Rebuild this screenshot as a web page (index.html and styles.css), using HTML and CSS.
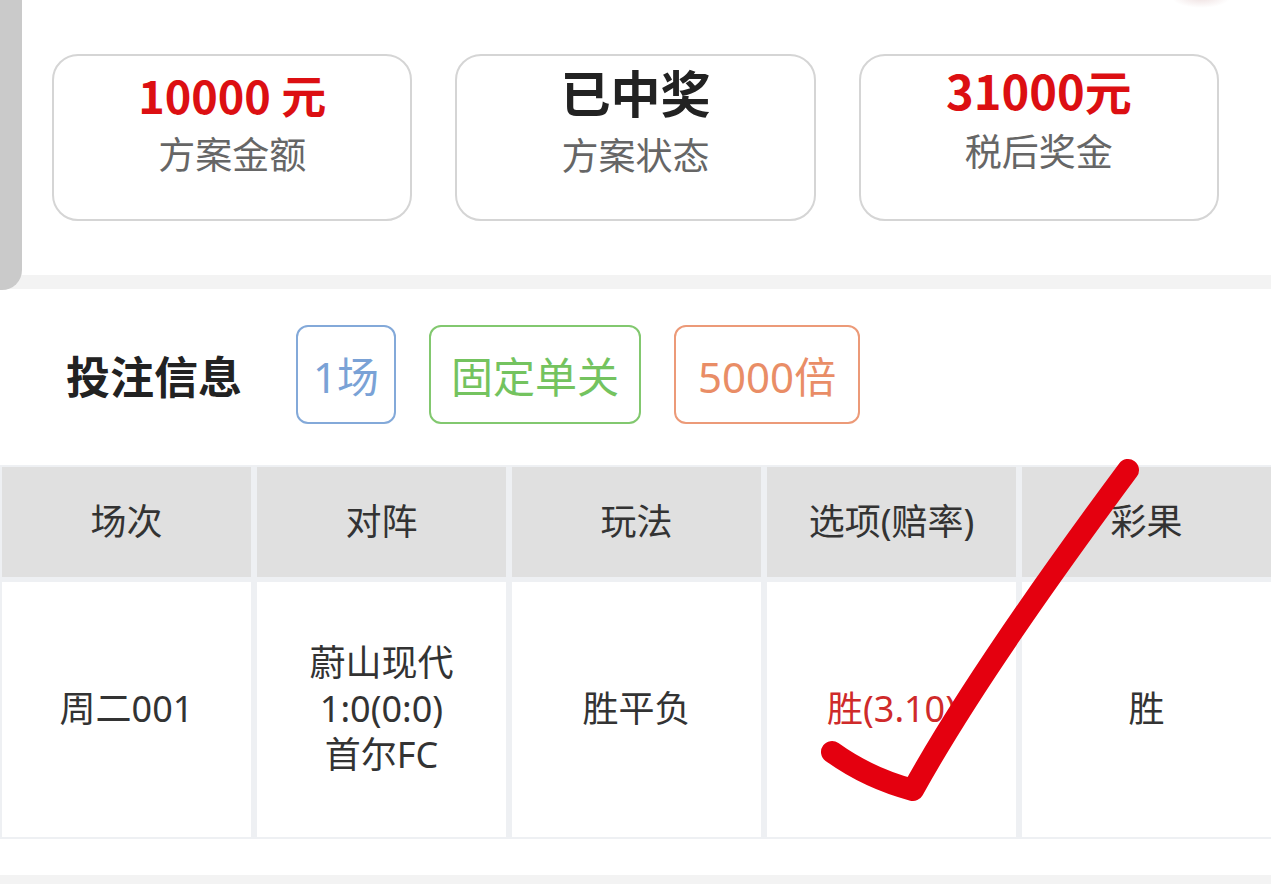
FILE: index.html
```html
<!DOCTYPE html>
<html lang="zh-CN">
<head>
    <meta charset="UTF-8">
    <meta name="viewport" content="width=device-width, initial-scale=1.0">
    <title>方案详情</title>
    <link rel="stylesheet" href="styles.css">
</head>
<body>
    <div class="page">
        <div class="side-handle"></div>
        <div class="corner-shadow"></div>

        <section class="summary">
            <div class="card">
                <p class="card-value red">10000 元</p>
                <p class="card-label">方案金额</p>
            </div>
            <div class="card">
                <p class="card-value dark">已中奖</p>
                <p class="card-label">方案状态</p>
            </div>
            <div class="card">
                <p class="card-value red big">31000元</p>
                <p class="card-label">税后奖金</p>
            </div>
        </section>

        <div class="band"></div>

        <section class="bet-head">
            <h2>投注信息</h2>
            <span class="tag tag-blue">1场</span>
            <span class="tag tag-green">固定单关</span>
            <span class="tag tag-orange">5000倍</span>
        </section>

        <div class="bet-table">
            <div class="th">场次</div>
            <div class="th">对阵</div>
            <div class="th">玩法</div>
            <div class="th">选项(赔率)</div>
            <div class="th">彩果</div>

            <div class="td">周二001</div>
            <div class="td">蔚山现代<br>1:0(0:0)<br>首尔FC</div>
            <div class="td">胜平负</div>
            <div class="td pick">胜(3.10)</div>
            <div class="td">胜</div>
        </div>

        <div class="band band-bottom"></div>

        <svg class="check" width="1271" height="884" viewBox="0 0 1271 884">
            <path d="M832 752 Q868 778 913 790 Q978 672 1128 470" fill="none" stroke="#e4000f" stroke-width="22" stroke-linecap="round" stroke-linejoin="round"/>
        </svg>
    </div>
</body>
</html>
```

FILE: styles.css
```css
* {
    margin: 0;
    padding: 0;
    box-sizing: border-box;
}
body {
    font-family: "Noto Sans", "Noto Sans CJK SC", sans-serif;
    background-color: #fff;
    color: #333;
}
.page {
    position: relative;
    width: 1271px;
    height: 884px;
    overflow: hidden;
}
.side-handle {
    position: absolute;
    left: 0;
    top: 0;
    width: 22px;
    height: 290px;
    background-color: #cacaca;
    border-bottom-right-radius: 20px;
    z-index: 2;
}
.corner-shadow {
    position: absolute;
    right: 40px;
    top: -14px;
    width: 60px;
    height: 22px;
    border-radius: 50%;
    background: radial-gradient(ellipse at center, rgba(220, 190, 190, 0.5), rgba(255, 255, 255, 0) 70%);
}
.summary {
    display: flex;
    gap: 43px;
    padding: 54px 52px;
    height: 275px;
}
.card {
    flex: 1;
    height: 167px;
    border: 2px solid #d5d5d5;
    border-radius: 26px;
    display: flex;
    flex-direction: column;
    align-items: center;
    padding-top: 6px;
}
.card-value {
    font-family: "Noto Sans CJK SC", sans-serif;
    font-size: 45px;
    font-weight: bold;
    line-height: 1.45;
}
.card-value.red {
    color: #dc0f12;
}
.card-value.dark {
    color: #222;
    font-size: 50px;
    margin-top: -7px;
}
.card-value.big {
    font-size: 47px;
    margin-top: -6px;
}
.card-label {
    font-family: "Noto Sans CJK SC", sans-serif;
    font-size: 37px;
    line-height: 1.45;
    color: #666;
}
.band {
    height: 14px;
    background-color: #f3f3f3;
}
.bet-head {
    display: flex;
    align-items: center;
    gap: 33px;
    padding: 36px 0 41px 66px;
}
.bet-head h2 {
    font-family: "Noto Sans CJK SC", sans-serif;
    font-size: 44px;
    font-weight: bold;
    color: #222;
    margin-right: 21px;
}
.tag {
    height: 99px;
    display: flex;
    align-items: center;
    padding: 0 20px;
    font-size: 42px;
    border: 2px solid;
    border-radius: 12px;
}
.tag-blue {
    color: #7aa2d6;
    border-color: #83a9d9;
    padding: 0 15px;
}
.tag-green {
    color: #74c35f;
    border-color: #82c86f;
}
.tag-orange {
    color: #e98d66;
    border-color: #ec9a78;
    padding: 0 22px;
}
.bet-table {
    display: grid;
    grid-template-columns: repeat(5, 1fr);
    grid-template-rows: 110px 255px;
    gap: 5px 6px;
    padding: 2px 0 2px 2px;
    background-color: #eef0f3;
}
.th, .td {
    display: flex;
    align-items: center;
    justify-content: center;
    text-align: center;
    font-size: 36px;
    line-height: 46px;
    color: #333;
}
.th {
    background-color: #e0e0e0;
}
.td {
    background-color: #fff;
    padding-bottom: 2px;
}
.td.pick {
    color: #cf2a2a;
}
.band-bottom {
    margin-top: 36px;
    height: 20px;
}
.check {
    position: absolute;
    left: 0;
    top: 0;
    pointer-events: none;
}
```
